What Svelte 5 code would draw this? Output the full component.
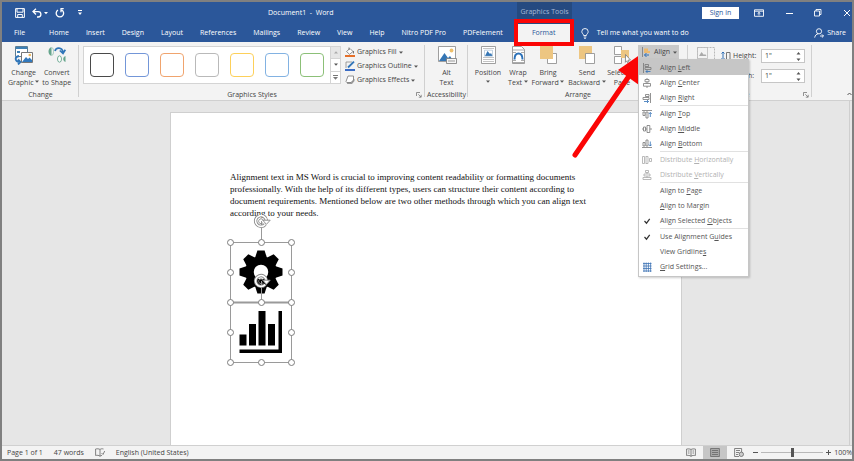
<script>
  const tabs = [
    'File', 'Home', 'Insert', 'Design', 'Layout', 'References', 'Mailings',
    'Review', 'View', 'Help', 'Nitro PDF Pro', 'PDFelement',
  ]

  const swatches = ['#4a4a4a', '#7396d8', '#f0a46e', '#b9b9b9', '#fdd05a', '#82b2e2', '#8cc078']

  // Label is split around the access key: [before, key, after]
  const menu = [
    [
      { label: ['Align ', 'L', 'eft'], icon: 'left', active: true },
      { label: ['Align ', 'C', 'enter'], icon: 'center' },
      { label: ['Align ', 'R', 'ight'], icon: 'right' },
    ],
    [
      { label: ['Align ', 'T', 'op'], icon: 'top' },
      { label: ['Align ', 'M', 'iddle'], icon: 'middle' },
      { label: ['Align ', 'B', 'ottom'], icon: 'bottom' },
    ],
    [
      { label: ['Distribute ', 'H', 'orizontally'], icon: 'disth', disabled: true },
      { label: ['Distribute ', 'V', 'ertically'], icon: 'distv', disabled: true },
    ],
    [
      { label: ['Align to ', 'P', 'age'] },
      { label: ['', 'A', 'lign to Margin'] },
      { label: ['Align Selected ', 'O', 'bjects'], icon: 'check' },
    ],
    [
      { label: ['Use Alignment G', 'u', 'ides'], icon: 'check' },
      { label: ['View Gridline', 's', ''] },
      { label: ['', 'G', 'rid Settings...'], icon: 'grid' },
    ],
  ]

  const handles = [
    [5, 27], [36, 27], [66, 27], [5, 57], [66, 57],
    [5, 87], [36, 87], [66, 87], [5, 117], [66, 117],
    [5, 147], [36, 147], [66, 147],
  ]
  const teeth = [0, 45, 90, 135, 180, 225, 270, 315]
</script>

{#snippet caret()}
  <svg class="caret" width="4" height="3" viewBox="0 0 4 3"><path d="M0 .5h4L2 2.7z" fill="#555" /></svg>
{/snippet}

{#snippet launcher()}
  <button class="launcher" aria-label="More options">
    <svg width="6" height="6" viewBox="0 0 6 6" fill="none" stroke="#777" stroke-width=".8"><path d="M.5 4V.5H4M2.3 2.3 5 5M5.2 2.8v2.4H2.8" /></svg>
  </button>
{/snippet}

{#snippet rotate(x, y)}
  <g transform="translate({x} {y})" fill="none">
    <path d="M4.2 3.4A5.4 5.4 0 1 1 5.4-.4" stroke="#8a8a8a" stroke-width="3.4" />
    <path d="M4.2 3.4A5.4 5.4 0 1 1 5.4-.4" stroke="#fff" stroke-width="1.6" />
    <path d="M1.8-.8h7.4L5.4 3.4z" fill="#fff" stroke="#8a8a8a" stroke-width=".9" />
    <path d="M2 1.6A2.4 2.4 0 1 1 2.4-.2" stroke="#8a8a8a" stroke-width=".9" />
  </g>
{/snippet}

{#snippet menuIcon(name)}
  <svg width="10" height="10" viewBox="0 0 10 10" fill="none" stroke="#777" stroke-width=".8">
    {#if name === 'left'}
      <path d="M1.5 0v10M3 1.5h3.5v2H3zM3 4.5h6v2H3z" /><path d="M8.5 8.5H4M5.5 7 4 8.5 5.5 10" stroke="#2f6eb5" />
    {:else if name === 'center'}
      <path d="M5 0v1.5M3 1.5h4v2.3H3zM5 3.8v1.7M1.5 5.5h7v2.7h-7zM5 8.2V10" />
    {:else if name === 'right'}
      <path d="M8.5 0v10M3.5 1.5H7v2H3.5zM1 4.5h6v2H1z" /><path d="M2 8.5h4.5M5 7l1.500 1.500L5 10" stroke="#2f6eb5" />
    {:else if name === 'top'}
      <path d="M0 1.5h10M1 3h2v3.5H1zM4 3h2v6H4z" /><path d="M8.3 8V3.5M6.8 5l1.5-1.5L9.8 5" stroke="#2f6eb5" />
    {:else if name === 'middle'}
      <path d="M0 5h1.5M1.5 3h2v4h-2zM3.5 5H5M5 1.5h2.8v7H5zM7.8 5H10" />
    {:else if name === 'bottom'}
      <path d="M0 8.5h10M1 3.5h2V7H1zM4 1h2v6H4z" /><path d="M8.3 2.5V7M6.8 5.5 8.3 7l1.5-1.5" stroke="#2f6eb5" />
    {:else if name === 'disth'}
      <path d="M.5 1.5h2v7h-2zM4 1v8M4 1.5h2v7H4M7.5 3.5h2v3h-2z" stroke="#aaa" />
    {:else if name === 'distv'}
      <path d="M3.5.5h3v2h-3zM2 4h6v2H2zM1 7.5h8v2H1zM5 2.5V4M5 6v1.5" stroke="#aaa" />
    {:else if name === 'check'}
      <path d="m2.5 5 2 2.2 3.2-4.4" stroke="#333" stroke-width="1.2" />
    {:else if name === 'grid'}
      <path d="M1 1.500h8.500M1 4h8.500M1 6.500h8.500M1 9h8.500M2 .5V10M4.200 .5V10M6.400 .5V10M8.600 .5V10" stroke="#3f74b5" />
    {/if}
  </svg>
{/snippet}

<div class="window">
  <header class="titlebar">
    <div class="quick">
      <button aria-label="Save">
        <svg width="10" height="10" viewBox="0 0 10 10" fill="none" stroke="#fff"><path d="M.6.6h8.800v8.800H.6zM2 .6v3.600h6V.6M2.700 9.400V6.500h4.600v2.900" /></svg>
      </button>
      <button aria-label="Undo">
        <svg width="16" height="10" viewBox="0 0 16 10" fill="none" stroke="#fff"><path d="M4 .8 1 3.600l3 2.800M1.200 3.600h5a2.600 2.600 0 0 1 0 5.400H5" stroke-width="1.300" /><path d="M12 4h4l-2 2.300z" fill="#fff" stroke="none" /></svg>
      </button>
      <button aria-label="Repeat">
        <svg width="10" height="10" viewBox="0 0 10 10" fill="none" stroke="#fff" stroke-width="1.300"><path d="M6.800 2A3.700 3.700 0 1 1 3 2M5.500.6h3.200M6 .6v3.600" /></svg>
      </button>
      <button class="customize" aria-label="Customize">
        <svg width="4" height="6" viewBox="0 0 4 6"><path d="M0 0h4v1H0zM0 2.500h4L2 5z" fill="#fff" /></svg>
      </button>
    </div>
    <div class="doc-title">Document1 &nbsp;-&nbsp; Word</div>
    <div class="context">Graphics Tools</div>
    <div class="controls">
      <button class="signin">Sign in</button>
      <button aria-label="Ribbon display options">
        <svg width="10" height="8" viewBox="0 0 10 8" fill="none" stroke="#fff" stroke-width=".9"><path d="M.5.8h9v6.500h-9zM.5 2.200h9M5 6.500V3.400M3.600 4.700 5 3.400l1.400 1.300" /></svg>
      </button>
      <button aria-label="Minimize"><svg width="8" height="8" viewBox="0 0 8 8" stroke="#fff"><path d="M1 4.500h7" /></svg></button>
      <button aria-label="Restore"><svg width="8" height="8" viewBox="0 0 8 8" fill="none" stroke="#fff" stroke-width=".9"><path d="M.5 2h5v5h-5zM2 2V.5h5v5H5.500" /></svg></button>
      <button aria-label="Close"><svg width="8" height="8" viewBox="0 0 8 8" stroke="#fff"><path d="m1 1 6 6M7 1 1 7" /></svg></button>
    </div>
  </header>

  <nav class="tabs">
    {#each tabs as tab}
      <button class="tab">{tab}</button>
    {/each}
    <button class="tab current">Format<span class="highlight"></span></button>
    <button class="tell">
      <svg width="8" height="11" viewBox="0 0 8 11" fill="none" stroke="#fff" stroke-width=".9"><path d="M2.600 7.500C2.600 6 .8 5.500.8 3.700a3.200 3.200 0 0 1 6.400 0c0 1.800-1.800 2.300-1.800 3.800zM2.700 9h2.600M3.200 10.400h1.600" /></svg>
      Tell me what you want to do
    </button>
    <button class="share">
      <svg width="10" height="10" viewBox="0 0 10 10" fill="none" stroke="#fff" stroke-width=".9"><circle cx="5" cy="3.300" r="2.600" /><path d="M.7 9.600C1 7.400 2.500 6 4.200 5.800M6 8h3.500M7.800 6.300 9.500 8 7.800 9.700" /></svg>
      Share
    </button>
  </nav>

  <div class="ribbon">
    <section class="group change">
      <div class="body">
        <button class="big">
          <svg width="20" height="20" viewBox="0 0 20 20"><path d="M1.500 1.500h12v10h-12z" fill="#fff" stroke="#5c7d94" /><path d="M2 2h11v2H2zM3 6h3v2H3z" fill="#3d80b5" /><path d="M7.500 7.500h11v10h-11z" fill="#fff" stroke="#777" /><path d="m8 17 4-5 2 2 1.500-1.500L18 15v2z" fill="#3279bd" /><circle cx="15.800" cy="10" r="1.300" fill="#eeb75c" /><path d="M5 11c-5 1-4 6 1 6M4 14.500 6.500 17 4 19.500" fill="none" stroke="#2f75b8" stroke-width="1.800" /></svg>
          <span>Change</span><span>Graphic {@render caret()}</span>
        </button>
        <button class="big">
          <svg width="20" height="20" viewBox="0 0 20 20"><path d="M4.500 2C.5 3 .5 10 4.500 11z" fill="#65a58c" /><path d="M5 2.500c2 1 2 7 0 8" fill="none" stroke="#8fc0ac" stroke-width=".8" /><path d="M8 6c1-4 7-4 8 1M12.800 5.500 16 8.500l2.300-3.800" fill="none" stroke="#2f75b8" stroke-width="1.700" /><ellipse cx="12.500" cy="14" rx="2" ry="3.200" fill="#fff" stroke="#65a58c" stroke-width=".9" /><path d="M18.500 11c-3 1-3 5 0 6z" fill="#65a58c" /></svg>
          <span>Convert</span><span>to Shape</span>
        </button>
      </div>
      <footer>Change</footer>
    </section>

    <section class="group styles">
      <div class="body">
        <div class="gallery">
          <div class="swatches">
            {#each swatches as color, i}
              <button class="swatch" style="border-color: {color}" aria-label="Style {i + 1}"></button>
            {/each}
          </div>
          <div class="scroller">
            <button class="dim" aria-label="Previous"><svg width="4" height="3" viewBox="0 0 4 3"><path d="M0 2.500h4L2 .3z" fill="#aaa" /></svg></button>
            <button aria-label="Next">{@render caret()}</button>
            <button aria-label="More"><svg width="5" height="5" viewBox="0 0 5 5"><path d="M0 0h5v1H0zM0 2h5L2.500 4.800z" fill="#777" /></svg></button>
          </div>
        </div>
        <div class="rows">
          <button>
            <svg width="10" height="10" viewBox="0 0 10 10"><path d="m1.500 4.500 3.500-3 3 3-3.500 2.800z" fill="#fff" stroke="#777" stroke-width=".8" /><path d="M4 3V.5M8.500 4v2.500" stroke="#777" /><path d="M0 8h10v2H0z" fill="#e5702a" /></svg>
            Graphics Fill {@render caret()}
          </button>
          <button>
            <svg width="10" height="10" viewBox="0 0 10 10"><path d="M1 7V1h6" fill="none" stroke="#888" stroke-width=".8" /><path d="M3 6.500 9 .7" stroke="#3375b8" stroke-width="1.800" /><path d="M0 8h10v2H0z" fill="#3c6cc4" /></svg>
            Graphics Outline {@render caret()}
          </button>
          <button>
            <svg width="10" height="10" viewBox="0 0 10 10"><path d="M3 4h6.500v2L7 9H2z" fill="#999" /><path d="M1 6.500 3 1h5.500v4L6 7.500H1.800z" fill="#fff" stroke="#777" stroke-width=".8" /></svg>
            Graphics Effects {@render caret()}
          </button>
        </div>
      </div>
      <footer>Graphics Styles</footer>
      {@render launcher()}
    </section>

    <section class="group access">
      <div class="body">
        <button class="big">
          <svg width="20" height="20" viewBox="0 0 20 20"><path d="M1.500 1.500h17v15h-17z" fill="#fff" stroke="#888" stroke-width=".8" /><path d="m2 16 5.500-8L11 13l2-2 2 3v2z" fill="#3576b5" /><circle cx="14.500" cy="5.500" r="1.900" fill="#efc06b" /><path d="M9.500 13.500h10v5h-10z" fill="#f6f6f6" stroke="#777" stroke-width=".8" /><path d="M11 16h7" stroke="#999" /></svg>
          <span>Alt</span><span>Text</span>
        </button>
      </div>
      <footer>Accessibility</footer>
    </section>

    <section class="group arrange">
      <div class="body">
        <button class="big position">
          <svg width="20" height="20" viewBox="0 0 20 20"><path d="M3.500 1.500h14v17h-14z" fill="#fff" stroke="#888" stroke-width=".8" /><path d="M5 3.500h11M5 12.500h11M5 14.500h11M5 16.500h11" stroke="#aaa" stroke-width=".7" /><path d="m7 11 2.500-5L12 9l1-1 1.500 3z" fill="#3576b5" /><path d="M6.500 5.200h8v6h-8z" fill="none" stroke="#9ab5cc" stroke-width=".6" /></svg>
          <span>Position</span><span>{@render caret()}</span>
        </button>
        <button class="big wrap">
          <svg width="20" height="20" viewBox="0 0 20 20"><path d="M4.500 1.500h9l3 3v14h-12z" fill="#fff" stroke="#888" stroke-width=".8" /><path d="M5 5h11M5 7.500h3M13 7.500h3M5 15.500h3M13 15.500h3M5 17.500h11" stroke="#888" stroke-width=".7" /><path d="M6.500 14.500c0-8 8-8 8 0" fill="none" stroke="#2c71b8" stroke-width="2" /></svg>
          <span>Wrap</span><span>Text {@render caret()}</span>
        </button>
        <button class="big bring">
          <svg width="20" height="20" viewBox="0 0 20 20"><path d="M9.500 8.500h9v10h-9z" fill="#fff" stroke="#888" stroke-width=".8" /><path d="M2 1h13v13H2z" fill="#edc682" /></svg>
          <span>Bring</span><span>Forward {@render caret()}</span>
        </button>
        <button class="big send">
          <svg width="20" height="20" viewBox="0 0 20 20"><path d="M2 1h13v13H2z" fill="#edc682" /><path d="M8.500 8.500h9v10h-9z" fill="#fff" stroke="#888" stroke-width=".8" /></svg>
          <span>Send</span><span>Backward {@render caret()}</span>
        </button>
        <button class="big select">
          <svg width="20" height="20" viewBox="0 0 20 20"><path d="M2.500 1.500h7v8h-7zM2.500 11.500h7v7h-7z" fill="#fff" stroke="#888" stroke-width=".8" /><path d="M9 5h8v8H9z" fill="#edc682" /><path d="m13.500 9.500 5 5.500-2.500.2 1.500 3-1.300.6-1.300-3-1.500 1.500z" fill="#fff" stroke="#777" stroke-width=".8" /></svg>
          <span>Selection</span><span>Pane</span>
        </button>
        <div class="align">
          <button class="align-button">
            <svg width="10" height="10" viewBox="0 0 10 10"><path d="M1.500 0v10" stroke="#888" /><path d="M3 1.500h4v2.500h2V6H3z" fill="#edb96e" /><path d="M8 8H3.500M5.500 6 3.500 8l2 2" fill="none" stroke="#2f6eb5" /></svg>
            Align {@render caret()}
          </button>
          <div class="menu" role="menu">
            {#each menu as section}
              <div class="section">
                {#each section as item}
                  <button role="menuitem" class="item" class:active={item.active} disabled={item.disabled}>
                    <i>{#if item.icon}{@render menuIcon(item.icon)}{/if}</i>
                    <span>{item.label[0]}<u>{item.label[1]}</u>{item.label[2]}</span>
                  </button>
                {/each}
              </div>
            {/each}
          </div>
        </div>
      </div>
      <footer>Arrange</footer>
    </section>

    <section class="group size">
      <div class="body">
        <button class="big crop">
          <svg width="20" height="20" viewBox="0 0 20 20" fill="none"><path d="M1.500 2.500h17v14h-17z" stroke="#aaa" stroke-width=".8" stroke-dasharray="2 1" /><path d="M1.500 2.500h10v11h-10z" stroke="#bbb" stroke-width=".8" /><path d="m3 11 2.500-4L8 10l1-1 1.500 2z" fill="#aaa" /></svg>
          <span>Crop</span>
        </button>
        <div class="fields">
          <div class="field">
            <svg width="10" height="10" viewBox="0 0 10 10" fill="none"><path d="M2 1v8M.5 2.500 2 1l1.500 1.500M.5 7.500 2 9l1.500-1.500" stroke="#2f6eb5" /><path d="M5.500 1.500h3.500v8H5.500z" stroke="#777" /></svg>
            <label for="height">Height:</label>
            <div class="spin"><input id="height" value={'1"'} /><svg width="5" height="9" viewBox="0 0 5 9"><path d="M.5 2.500h4L2.500 0zM.5 6.500h4L2.500 9z" fill="#555" /></svg></div>
          </div>
          <div class="field">
            <svg width="10" height="10" viewBox="0 0 10 10" fill="none"><path d="M1 2h8M2.500.5 1 2l1.500 1.500M7.500.5 9 2 7.500 3.500" stroke="#2f6eb5" /><path d="M1 5.500h8v4H1z" stroke="#777" /></svg>
            <label for="width">Width:</label>
            <div class="spin"><input id="width" value={'1"'} /><svg width="5" height="9" viewBox="0 0 5 9"><path d="M.5 2.500h4L2.500 0zM.5 6.500h4L2.500 9z" fill="#555" /></svg></div>
          </div>
        </div>
      </div>
      <footer>Size</footer>
      {@render launcher()}
    </section>
    <button class="collapse" aria-label="Collapse the ribbon"><svg width="5" height="4" viewBox="0 0 5 4" fill="none" stroke="#555"><path d="m.5 3 2-2 2 2" /></svg></button>

    <svg class="arrow" width="76" height="118" viewBox="0 0 76 118">
      <path d="M5 113 59 34" stroke="#fb0505" stroke-width="5" stroke-linecap="round" />
      <path d="M71 12 48 28l21 15z" fill="#fb0505" />
    </svg>
  </div>

  <main class="canvas">
    <article class="page">
      <p>
        Alignment text in MS Word is crucial to improving content readability or formatting documents
        professionally. With the help of its different types, users can structure their content according to
        document requirements. Mentioned below are two other methods through which you can align text
        according to your needs.
      </p>
      <svg class="graphics" width="72" height="152" viewBox="0 0 72 152">
        <g transform="translate(36 57)">
          {#each teeth as angle}
            <path transform="rotate({angle})" d="M-6-14-3.600-21.500h7.200L6-14z" />
          {/each}
          <circle r="11.500" fill="none" stroke="#000" stroke-width="8.500" />
        </g>
        <path d="M14.500 119.500h7v11h-7zM24 109h7v21.500h-7zM33.500 96h7v34.500h-7zM43 109h7v21.500h-7zM53.500 96h3.500v42H14.500v-3.500h39z" />
        <g fill="none" stroke="#9a9a9a">
          <path d="M5.500 27.500h61v120h-61zM36.500 6v21M36.500 66v21" />
          <path d="M5.500 87.500h61" stroke-width="2" />
        </g>
        {@render rotate(36, 6)}
        {@render rotate(36, 66)}
        {#each handles as [x, y]}
          <circle cx={x + 0.5} cy={y + 0.5} r="3" fill="#fff" stroke="#7d7d7d" />
        {/each}
      </svg>
    </article>
    <div class="scrollbar"></div>
  </main>

  <footer class="status">
    <span>Page 1 of 1</span>
    <span>47 words</span>
    <svg width="10" height="9" viewBox="0 0 10 9" fill="none" stroke="#666" stroke-width=".8"><path d="M5 1.500C4 .7 2 .6.6 1v6.500c1.400-.4 3.400-.3 4.400.8V1.500C6 .7 7 .6 8.500 1M5 8.300c.5-.5 1-.7 2-.9M6.500 5 8 6.500 9.700 3" /></svg>
    <span>English (United States)</span>
    <div class="views">
      <button aria-label="Read mode"><svg width="10" height="9" viewBox="0 0 10 9" fill="none" stroke="#666" stroke-width=".8"><path d="M5 1.500v7M5 1.500C4 .8 2 .8.6 1v6.500c1.400-.2 3.400-.2 4.400.8 1-1 3-1 4.400-.8V1C8 .8 6 .8 5 1.500M2 3h1.500M2 5h1.500M6.500 3H8M6.500 5H8" /></svg></button>
      <button class="on" aria-label="Print layout"><svg width="10" height="9" viewBox="0 0 10 9" fill="#aaa" stroke="#666" stroke-width=".8"><path d="M.6.5h8.800v8H.6zM2 2.500h6M2 4.500h6M2 6.500h6" /></svg></button>
      <button aria-label="Web layout"><svg width="10" height="9" viewBox="0 0 10 9" fill="none" stroke="#666" stroke-width=".8"><path d="M5 8.500H.6v-8h7V4M2 2.500h4M2 4.500h3M2 6.500h2" /><circle cx="7.300" cy="6.300" r="2.200" fill="#ccc" /></svg></button>
    </div>
    <div class="zoom">
      <button aria-label="Zoom out"><svg width="5" height="5" viewBox="0 0 5 5" stroke="#555"><path d="M0 2.500h5" /></svg></button>
      <input type="range" min="10" max="190" value="100" aria-label="Zoom" />
      <button aria-label="Zoom in"><svg width="5" height="5" viewBox="0 0 5 5" stroke="#555"><path d="M0 2.500h5M2.500 0v5" /></svg></button>
      <span>100%</span>
    </div>
  </footer>
</div>

<style>
  :global(body) { margin: 0; }

  .window {
    display: flex;
    flex-direction: column;
    box-sizing: border-box;
    min-height: 100vh;
    border: 2px solid #808080;
    overflow: hidden;
    background: #e6e6e6;
    color: #444;
    font-family: 'Open Sans', 'Noto Sans', sans-serif;
    font-size: 7px;
    line-height: 10px;
  }
  button, input {
    margin: 0;
    padding: 0;
    border: 0;
    background: none;
    color: inherit;
    font: inherit;
    white-space: nowrap;
  }
  svg { display: block; flex: none; }

  .titlebar, .tabs { background: #2b579a; color: #fff; }
  .titlebar {
    display: grid;
    grid-template-columns: 266px 249px 55px 1fr;
    align-items: center;
    height: 22px;
  }
  .quick { display: flex; align-items: center; gap: 7px; padding-left: 13px; }
  .customize { padding: 2px 6px; }
  .context {
    height: 22px;
    line-height: 20px;
    text-align: center;
    background: #254a80;
    color: #a5b8d6;
  }
  .controls { display: flex; align-items: center; justify-content: flex-end; gap: 21px; padding-right: 1px; }
  .signin {
    width: 37px;
    height: 12px;
    margin-right: -6px;
    background: #fff;
    color: #2b579a;
  }

  .tabs { display: flex; align-items: stretch; height: 18px; gap: 17px; padding-left: 12px; }
  .tab:first-child { margin-right: 7px; }
  .current {
    position: relative;
    width: 52px;
    margin: 0 -6px 0 -2px;
    background: #f3f3f3;
    color: #2b579a;
  }
  .highlight {
    position: absolute;
    inset: -5px -4px -4px -4px;
    border: 4px solid #fb0505;
    z-index: 2;
  }
  .tell, .share { display: flex; align-items: center; gap: 8px; }
  .share { gap: 3px; margin-left: auto; padding-right: 6px; }

  .ribbon {
    position: relative;
    display: flex;
    height: 58px;
    background: #f3f3f3;
    border-bottom: 1px solid #d0d0d0;
  }
  .group {
    position: relative;
    display: flex;
    flex-direction: column;
    box-sizing: border-box;
    padding: 3px 0 0;
  }
  .group::after {
    content: '';
    position: absolute;
    right: 0;
    top: 3px;
    bottom: 3px;
    border-right: 1px solid #d0d0d0;
  }
  .body { display: flex; align-items: flex-start; flex: 1; }
  .group footer { text-align: center; }
  .launcher { position: absolute; right: 3px; bottom: 2px; }
  .caret { display: inline-block; vertical-align: middle; }

  .big { display: flex; flex-direction: column; align-items: center; }
  .big span { display: block; min-height: 10px; }
  .big svg:first-child { margin-bottom: 3px; }

  .change { width: 77px; }
  .change .body { gap: 3px; padding-left: 6px; }
  .styles { width: 346px; }
  .gallery {
    display: flex;
    box-sizing: border-box;
    height: 38px;
    margin: 1px 4px 0;
    border: 1px solid #d4d4d4;
    background: #fff;
  }
  .swatches { display: flex; align-items: center; gap: 11px; padding: 0 6px; }
  .swatch {
    box-sizing: border-box;
    width: 24px;
    height: 24px;
    border: 1px solid;
    border-radius: 4px;
  }
  .scroller { display: flex; flex-direction: column; width: 9px; border-left: 1px solid #d4d4d4; }
  .scroller button { display: flex; align-items: center; justify-content: center; flex: 1; }
  .scroller button + button { border-top: 1px solid #d4d4d4; }
  .dim { background: #e6e6e6; }
  .rows { display: flex; flex-direction: column; gap: 4px; padding-top: 2px; }
  .rows button { display: flex; align-items: center; gap: 2px; }

  .access { width: 43px; }
  .access .big { flex: 1; }

  .arrange { width: 220px; }
  .position { width: 40px; }
  .wrap { width: 20px; }
  .bring { width: 40px; }
  .send { width: 38px; }
  .select { width: 32px; }
  .align { position: relative; z-index: 3; }
  .align-button {
    display: flex;
    align-items: center;
    box-sizing: border-box;
    width: 41px;
    height: 14px;
    gap: 3px;
    padding: 0 3px;
    background: #c9c9c9;
  }
  .menu {
    position: absolute;
    top: 14px;
    left: 0;
    box-sizing: border-box;
    width: 111px;
    padding-bottom: 2px;
    border: 1px solid #c6c6c6;
    background: #fff;
    box-shadow: 1px 1px 2px #0003;
    color: #555;
  }
  .section + .section::before {
    content: '';
    display: block;
    height: 1px;
    margin-left: 21px;
    background: #e1e1e1;
  }
  .item {
    display: grid;
    grid-template-columns: 13px 1fr;
    align-items: center;
    gap: 5px;
    width: 100%;
    height: 15px;
    padding-left: 3px;
    text-align: left;
  }
  .item:disabled { color: #b1b1b1; }
  .item.active { background: #c6c6c6; }

  .size { width: 124px; }
  .size .body { padding-left: 8px; }
  .size footer { padding-right: 14px; }
  .crop { width: 20px; color: #aaa; }
  .fields { display: flex; flex-direction: column; gap: 6px; margin-left: 5px; padding-top: 4px; }
  .field { display: grid; grid-template-columns: 10px 26px 44px; align-items: center; gap: 2px; }
  .spin {
    display: flex;
    align-items: center;
    box-sizing: border-box;
    height: 14px;
    padding: 0 3px;
    border: 1px solid #c6c6c6;
    background: #fff;
  }
  .spin input { flex: 1; min-width: 0; }
  .collapse { align-self: flex-end; margin-left: auto; padding-bottom: 4px; }
  .arrow { position: absolute; top: 0; left: 568px; z-index: 2; }

  .canvas { position: relative; display: flex; flex: 1; padding: 11px 170px 0 168px; }
  .page {
    flex: 1;
    border: 1px solid #cfcfcf;
    border-bottom: 0;
    padding: 58px 78px 0 59px;
    background: #fff;
    color: #111;
  }
  .page p {
    margin: 0;
    font-family: 'Liberation Serif', 'Times New Roman', serif;
    font-size: 9px;
    line-height: 12px;
  }
  .graphics { margin: -4px 0 0 -5px; }
  .scrollbar {
    position: absolute;
    top: 0;
    right: 0;
    bottom: 0;
    width: 2px;
    border-left: 1px solid #cfcfcf;
  }

  .status {
    display: flex;
    align-items: center;
    gap: 11px;
    height: 13px;
    padding-left: 5px;
    border-top: 1px solid #d0d0d0;
    background: #f3f3f3;
  }
  .views { display: flex; align-self: stretch; margin: 0 -9px 0 auto; }
  .views button { display: flex; align-items: center; justify-content: center; width: 24px; }
  .views .on { background: #c6c6c6; }
  .zoom { display: flex; align-items: center; gap: 3px; }
  .zoom input { appearance: none; width: 62px; height: 9px; }
  .zoom input::-webkit-slider-runnable-track { height: 9px; background: linear-gradient(#b8b8b8, #b8b8b8) center / 100% 1px no-repeat; }
  .zoom input::-webkit-slider-thumb { appearance: none; width: 3px; height: 9px; background: #555; }
</style>
